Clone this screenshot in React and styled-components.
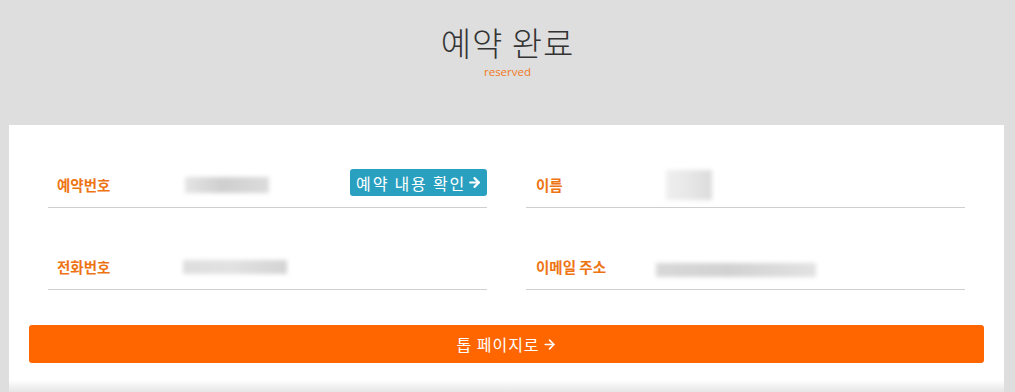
import React from 'react';
import styled, { createGlobalStyle } from 'styled-components';
import { ArrowRight } from 'lucide-react';

const GlobalStyle = createGlobalStyle`
  html, body {
    margin: 0;
    padding: 0;
    background: #dedede;
    font-family: "Noto Sans CJK KR", "Noto Sans", sans-serif;
  }
`;

const Page = styled.div`
  width: 1015px;
  height: 392px;
  overflow: hidden;
  display: flex;
  flex-direction: column;
`;

const Header = styled.div`
  display: flex;
  flex-direction: column;
  align-items: center;
  padding-top: 19px;
  height: 125px;
  box-sizing: border-box;
`;

const Title = styled.h1`
  margin: 0;
  font-size: 33px;
  font-weight: 300;
  line-height: 46px;
  color: #333;
  letter-spacing: 1px;
`;

const Sub = styled.span`
  font-family: "Open Sans", "Liberation Sans", sans-serif;
  font-size: 11.5px;
  line-height: 14px;
  color: #f07a22;
`;

const Panel = styled.div`
  width: 995px;
  margin-left: 9px;
  flex: 1;
  box-sizing: border-box;
  padding: 37px 0 0;
  background: linear-gradient(#fff calc(100% - 12px), #e6e6e6);
`;

const Grid = styled.div`
  display: grid;
  grid-template-columns: 1fr 1fr;
  column-gap: 39px;
  row-gap: 36px;
  padding: 0 39px;
`;

const Row = styled.div`
  display: flex;
  align-items: center;
  height: 45px;
  border-bottom: 1px solid #cfcfcf;
  padding-left: ${p => p.indent}px;
`;

const Label = styled.span`
  width: ${p => p.width}px;
  flex-shrink: 0;
  font-size: 14.5px;
  font-weight: 700;
  color: #ee7413;
`;

const Blur = styled.span`
  display: inline-block;
  width: ${p => p.w}px;
  height: ${p => p.h}px;
  margin-top: ${p => p.dy || 0}px;
  background: ${p => p.bg};
  filter: blur(2px);
`;

const Value = styled.div`
  flex: 1;
  display: flex;
  align-items: center;
`;

const CheckButton = styled.button`
  display: flex;
  align-items: center;
  gap: 1px;
  height: 27px;
  padding: 0 5px 0 6px;
  border: none;
  border-radius: 3px;
  background: #2aa0c0;
  color: #fff;
  font-family: inherit;
  font-size: 16px;
  letter-spacing: 1.8px;
  cursor: pointer;
  margin-top: -4px;
`;

const TopButton = styled.button`
  display: flex;
  align-items: center;
  justify-content: center;
  gap: 2px;
  width: 955px;
  height: 38px;
  margin: 35px 20px 0;
  border: none;
  border-radius: 3px;
  background: #ff6600;
  color: #fff;
  font-family: inherit;
  font-size: 16px;
  letter-spacing: 1px;
  cursor: pointer;
`;

const grey = (a, b, c) =>
  `linear-gradient(90deg, ${a} 0%, ${b} 45%, ${c} 100%)`;

export default function App() {
  return (
    <>
      <GlobalStyle />
      <Page>
        <Header>
          <Title>예약 완료</Title>
          <Sub>reserved</Sub>
        </Header>
        <Panel>
          <Grid>
            <Row indent={9}>
              <Label width={128}>예약번호</Label>
              <Value>
                <Blur w={84} h={16} bg={grey('#e4e4e4', '#cfcfcf', '#dcdcdc')} />
              </Value>
              <CheckButton>
                예약 내용 확인
                <ArrowRight size={15} strokeWidth={3.5} />
              </CheckButton>
            </Row>
            <Row indent={10}>
              <Label width={130}>이름</Label>
              <Value>
                <Blur w={46} h={30} bg={grey('#efefef', '#e8e8e8', '#dcdcdc')} />
              </Value>
            </Row>
            <Row indent={9}>
              <Label width={126}>전화번호</Label>
              <Value>
                <Blur w={104} h={14} bg={grey('#dedede', '#e2e2e2', '#d4d4d4')} />
              </Value>
            </Row>
            <Row indent={10}>
              <Label width={120}>이메일 주소</Label>
              <Value>
                <Blur w={160} h={14} dy={6} bg={grey('#d8d8d8', '#d2d2d2', '#e2e2e2')} />
              </Value>
            </Row>
          </Grid>
          <TopButton>
            톱 페이지로
            <ArrowRight size={15} strokeWidth={2.5} />
          </TopButton>
        </Panel>
      </Page>
    </>
  );
}
